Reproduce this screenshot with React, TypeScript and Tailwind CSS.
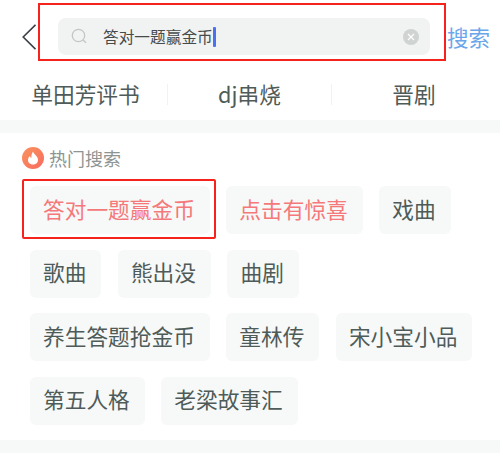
const font = { fontFamily: '"Noto Sans CJK SC", "Liberation Sans", sans-serif' };

function Tag({ text, red }: { text: string; red?: boolean }) {
  return (
    <div className={`h-[48px] pl-[13px] pr-[15px] pb-[3px] flex items-center rounded-[6px] bg-[#f6f9f8] text-[21.7px] leading-none whitespace-nowrap ${red ? "text-[#f5787a]" : "text-[#4f5b58]"}`}>
      {text}
    </div>
  );
}

export default function App() {
  return (
    <div className="relative w-[500px] h-[462px] bg-white overflow-hidden" style={font}>
      <div className="h-[120px] flex flex-col">
        <div className="flex items-center h-[73px]">
          <div className="w-[58px] flex justify-end pr-[22px]">
            <svg width="14" height="26" viewBox="0 0 14 26" fill="none">
              <path d="M13.5 0.8 L1.2 13 L13.5 25.2" stroke="#3b4046" strokeWidth="1.6" />
            </svg>
          </div>
          <div className="w-[372px] h-[37px] rounded-[8px] bg-[#f1f2f2] flex items-center pl-[13px] pr-[11px]">
            <svg width="17" height="17" viewBox="0 0 17 17" fill="none">
              <circle cx="7.5" cy="7.5" r="6.2" stroke="#c2c6c5" strokeWidth="1.3" />
              <path d="M12 12 L15 14.8" stroke="#c2c6c5" strokeWidth="1.3" />
            </svg>
            <span className="ml-[15px] text-[15.7px] leading-none text-[#454b4b]">答对一题赢金币</span>
            <span className="w-[3px] h-[20px] bg-[#4c70ee] rounded-[1px]" />
            <div className="ml-auto w-[16px] h-[16px] rounded-full bg-[#cfd4d2] flex items-center justify-center">
              <svg width="8" height="8" viewBox="0 0 8 8" fill="none">
                <path d="M1 1 L7 7 M7 1 L1 7" stroke="#fff" strokeWidth="1.2" />
              </svg>
            </div>
          </div>
          <span className="ml-[17px] text-[21.5px] leading-none text-[#6ba6ea] whitespace-nowrap">搜索</span>
        </div>
        <div className="h-[47px] flex items-center pb-[5px]">
          <div className="w-[168px] h-[21px] flex items-center justify-center border-r border-[#f1f3f3] pl-[4px]">
            <span className="text-[21.7px] leading-none text-[#4f5b58] whitespace-nowrap">单田芳评书</span>
          </div>
          <div className="w-[164px] h-[21px] flex items-center justify-center border-r border-[#f1f3f3]">
            <span className="text-[21.7px] leading-none text-[#4f5b58] whitespace-nowrap">dj串烧</span>
          </div>
          <div className="flex-1 flex items-center justify-center pr-[4px]">
            <span className="text-[21.7px] leading-none text-[#4f5b58] whitespace-nowrap">晋剧</span>
          </div>
        </div>
      </div>
      <div className="h-[13px] bg-[#f6f9f8]" />
      <div className="px-[30px] pt-[14px]">
        <div className="flex items-center -ml-[8px] h-[22px]">
          <div className="w-[22px] h-[22px] rounded-full bg-gradient-to-br from-[#f9925f] to-[#f86a5e] flex items-center justify-center">
            <svg width="12" height="14" viewBox="0 0 12 14">
              <path d="M6 0.5 C6.5 3 11 5 11 9 C11 12 8.5 13.5 6 13.5 C3.5 13.5 1 12 1 9 C1 7 2 5.8 3 5 C3.2 6 3.6 6.6 4.4 7 C4.2 4.5 4.8 2.2 6 0.5 Z" fill="#fff" />
            </svg>
          </div>
          <span className="ml-[5px] text-[18px] leading-none text-[#8d9492]">热门搜索</span>
        </div>
        <div className="mt-[17px] flex flex-col gap-[15.6px]">
          <div className="flex gap-[16.5px]">
            <Tag text="答对一题赢金币" red />
            <Tag text="点击有惊喜" red />
            <Tag text="戏曲" />
          </div>
          <div className="flex gap-[16.5px]">
            <Tag text="歌曲" />
            <Tag text="熊出没" />
            <Tag text="曲剧" />
          </div>
          <div className="flex gap-[16.5px]">
            <Tag text="养生答题抢金币" />
            <Tag text="童林传" />
            <Tag text="宋小宝小品" />
          </div>
          <div className="flex gap-[16.5px]">
            <Tag text="第五人格" />
            <Tag text="老梁故事汇" />
          </div>
        </div>
      </div>
      <div className="mt-[15px] h-[13px] bg-[#f6f9f8]" />
      <div className="absolute left-[38px] top-[3px] w-[408px] h-[58px] border-[2px] border-[#f5231c]" />
      <div className="absolute left-[22px] top-[179px] w-[194px] h-[60px] border-[2px] border-[#f5231c] rounded-[2px]" />
    </div>
  );
}
